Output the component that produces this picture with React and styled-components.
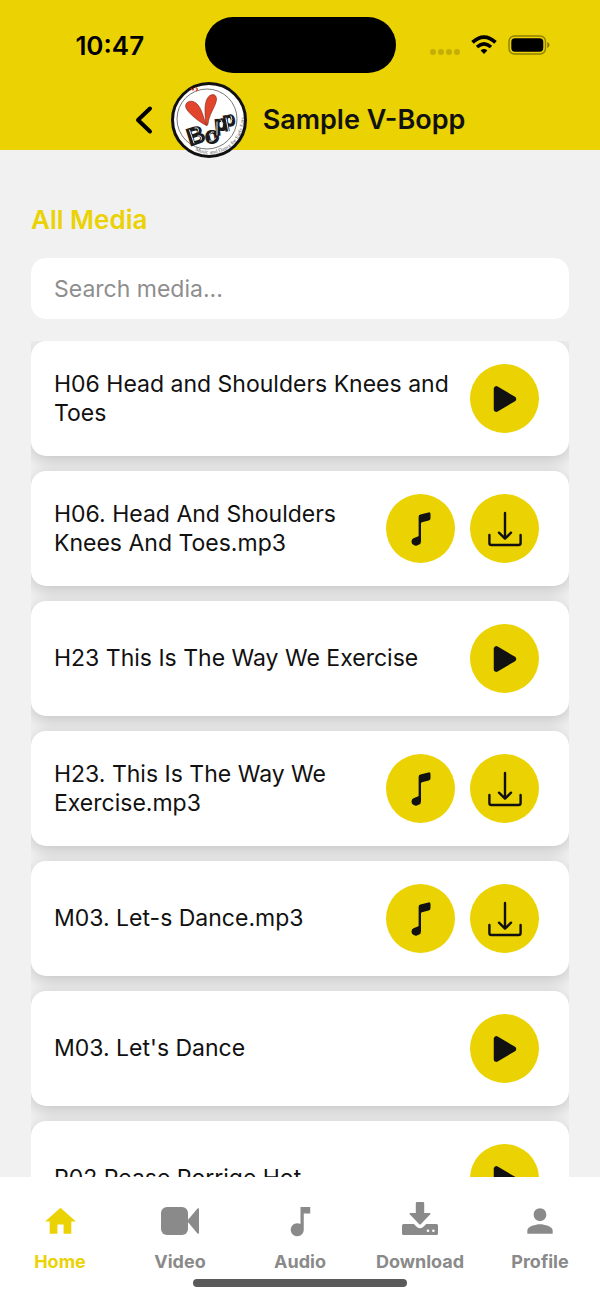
import React, { useState } from 'react'

import styled, { createGlobalStyle } from 'styled-components';
import { IoMusicalNote, IoPlay } from 'react-icons/io5';
import { MdHome, MdMusicNote, MdPerson } from 'react-icons/md';


const media = [
  { title: 'H06 Head and Shoulders Knees and Toes', type: 'video' },
  { title: 'H06. Head And Shoulders Knees And Toes.mp3', type: 'audio' },
  { title: 'H23 This Is The Way We Exercise', type: 'video' },
  { title: 'H23. This Is The Way We Exercise.mp3', type: 'audio' },
  { title: 'M03. Let-s Dance.mp3', type: 'audio' },
  { title: "M03. Let's Dance", type: 'video' },
  { title: 'P02 Pease Porrige Hot', type: 'video' },
]

const VideoIcon = () => (
  <svg width="40" height="28" viewBox="0 0 40 28" fill="currentColor" aria-hidden="true">
    <rect x="1" y="0" width="27" height="28" rx="6" />
    <path d="M27 14L37.500 1.600Q39 .6 39 2.200V25.800Q39 27.400 37.500 26.400Z" />
  </svg>
)

const DownloadIcon = () => (
  <svg width="36" height="38" viewBox="0 0 36 38" aria-hidden="true">
    <path
      fill="currentColor"
      fillRule="evenodd"
      d="M15 0H21Q22.200 0 22.200 1.200V11H27.500Q29.300 11 28 12.400L19 22Q18 23 17 22L8 12.400Q6.700 11 8.500 11H13.800V1.200Q13.800 0 15 0ZM1.600 22H11.800L15.200 25.200Q18 27.400 20.800 25.200L24.200 22H34.400Q36 22 36 23.600V31.400Q36 33 34.400 33H1.600Q0 33 0 31.400V23.600Q0 22 1.600 22ZM26 27.400A1.300 1.300 0 1 0 26 30A1.300 1.300 0 1 0 26 27.400ZM31.400 27.400A1.300 1.300 0 1 0 31.400 30A1.300 1.300 0 1 0 31.400 27.400Z"
    />
  </svg>
)

const TrayIcon = () => (
  <svg width="36" height="36" viewBox="0 0 36 36" fill="none" stroke="currentColor" strokeWidth="2.400" strokeLinecap="round" strokeLinejoin="round" aria-hidden="true">
    <path d="M18 2V27.500M12 21.700L18 27.700L24 21.700M2.400 24V32Q2.400 34 4.400 34H31.600Q33.600 34 33.600 32V24" />
  </svg>
)

const BackIcon = () => (
  <svg width="18" height="30" viewBox="0 0 18 30" fill="none" stroke="currentColor" strokeWidth="4" strokeLinecap="round" strokeLinejoin="round" aria-hidden="true">
    <path d="M15 3.500L3 15L15 26.500" />
  </svg>
)

const WifiIcon = () => (
  <svg width="26" height="20" viewBox="0 0 26 20" aria-hidden="true">
    <g fill="none" stroke="#000" strokeWidth="3.600">
      <path d="M1.500 7.400Q13-3.200 24.500 7.400" />
      <path d="M6 12Q13 5.800 20 12" />
    </g>
    <path d="M9.600 15.400Q13 12.600 16.400 15.400L13 19Z" />
  </svg>
)

const BatteryIcon = () => (
  <svg width="42" height="20" viewBox="0 0 42 20" aria-hidden="true">
    <rect x="1" y="1" width="36.500" height="18" rx="5.500" fill="none" stroke="#000" strokeOpacity=".4" strokeWidth="1.400" />
    <rect x="3.300" y="3.300" width="32" height="13.400" rx="3.600" />
    <path d="M39.300 7V13Q41.500 12 41.500 10T39.300 7Z" fillOpacity=".45" />
  </svg>
)

const Logo = () => (
  <LogoSvg viewBox="0 0 76 76" role="img" aria-label="V-Bopp, Music and Dance for Early Ears">
    <defs>
      <path id="motto" d="M24 68.500A34.500 34.500 0 0 0 70.500 24" />
    </defs>
    <circle cx="38" cy="38" r="36.500" fill="#fff" stroke="#111" strokeWidth="3" />
    <circle cx="36" cy="37" r="30" fill="none" stroke="#555" strokeWidth=".8" />
    <path d="M20 6.500q1 2 3 1M24 6q1-1 2 .5t-1 2.500" fill="none" stroke="#e2452c" strokeWidth="1.400" />
    <g fill="#e2452c" stroke="#7b2419" strokeWidth=".6">
      <path d="M35.500 43.500C28 40 17 31 15 26C13 20 20 17 25 21C31 26 32 35 35.500 43.500Z" />
      <path d="M35 43C34 33 33 23 36 17C39 11 46 11 45.500 18C44 26 38 32 37 42Q36 45 35 43Z" />
    </g>
    <g fontFamily="'Liberation Sans', sans-serif" fontWeight="700" fill="#1b1b1b" stroke="#1b1b1b" strokeWidth="1.400">
      <text x="19" y="64" fontSize="24" transform="rotate(-18 19 64)">B</text>
      <text x="35" y="62" fontSize="23" transform="rotate(-8 35 62)">o</text>
      <text x="44" y="49" fontSize="21" transform="rotate(-6 44 49)">p</text>
      <text x="53" y="45" fontSize="20" transform="rotate(-10 53 45)">p</text>
    </g>
    <g fill="none" stroke="#fff" strokeWidth=".9" strokeLinecap="round">
      <path d="M18.500 48L23 61M24 46q5-1 3 4M27 54q5-1 3 4M38.500 53q1-4 4-3M38.500 59q4 1 6-3M46 40V53M50 38q3 3 1 7M55 36L57.500 49M60 34q2 3 0 7" />
    </g>
    <text fontFamily="'Liberation Serif', serif" fontSize="5.500" fill="#555">
      <textPath href="#motto">Music and Dance for Early Ears</textPath>
    </text>
  </LogoSvg>
)

const tabs = [
  { label: 'Home', icon: <MdHome size={37} /> },
  { label: 'Video', icon: <VideoIcon /> },
  { label: 'Audio', icon: <MdMusicNote size={39} /> },
  { label: 'Download', icon: <DownloadIcon /> },
  { label: 'Profile', icon: <MdPerson size={38} /> },
]

const App = () => {
  //state
  const [search, setSearch] = useState('')
  const [active, setActive] = useState('Home')

  //comportement
  const visible = media.filter((item) =>
    item.title.toLowerCase().includes(search.toLowerCase())
  )

  //render
  return (
    <Screen>
      <GlobalStyle />
      <Header>
        <StatusBar>
          <Time>10:47</Time>
          <Island />
          <Indicators>
            <Dots><Dot /><Dot /><Dot /><Dot /></Dots>
            <WifiIcon />
            <BatteryIcon />
          </Indicators>
        </StatusBar>
        <TitleBar>
          <BackButton type="button" aria-label="Back"><BackIcon /></BackButton>
          <Logo />
          <Title>Sample V-Bopp</Title>
        </TitleBar>
      </Header>

      <Main>
        <Heading>All Media</Heading>
        <Search
          type="text"
          aria-label="Search media"
          placeholder="Search media..."
          value={search}
          onChange={(e) => setSearch(e.target.value)}
        />
        <List>
          {visible.map((item) => (
            <Card key={item.title}>
              <Name>{item.title}</Name>
              {item.type === 'video' ? (
                <RoundButton type="button" aria-label="Play video"><IoPlay size={36} /></RoundButton>
              ) : (
                <>
                  <RoundButton type="button" aria-label="Play audio"><IoMusicalNote size={38} /></RoundButton>
                  <RoundButton type="button" aria-label="Download"><TrayIcon /></RoundButton>
                </>
              )}
            </Card>
          ))}
        </List>
      </Main>

      <Footer>
        <Tabs>
          {tabs.map((tab) => (
            <Tab key={tab.label} type="button" $active={active === tab.label} onClick={() => setActive(tab.label)}>
              <TabIcon>{tab.icon}</TabIcon>
              {tab.label}
            </Tab>
          ))}
        </Tabs>
        <HomeIndicator />
      </Footer>
    </Screen>
  )
}

const GlobalStyle = createGlobalStyle`
  * {
    box-sizing: border-box;
  }
  body {
    margin: 0;
    font-family: Inter, 'Liberation Sans', sans-serif;
    color: #111;
    background: #f1f1f1;
  }
  button, input {
    font-family: inherit;
  }
  svg {
    display: block;
    flex-shrink: 0;
  }
`;
const Screen = styled.div`
  display: flex;
  flex-direction: column;
  height: 100vh;
`;
const Header = styled.header`
  display: flex;
  flex-direction: column;
  height: 150px;
  padding-top: 17px;
  background: #ebd203;
`;
const StatusBar = styled.div`
  display: grid;
  grid-template-columns: 1fr 191px 1fr;
  align-items: center;
`;
const Time = styled.span`
  padding-left: 15px;
  font-size: 26px;
  font-weight: 600;
  text-align: center;
  color: #000;
`;
const Island = styled.div`
  height: 56px;
  border-radius: 28px;
  background: #000;
`;
const Indicators = styled.div`
  display: flex;
  align-items: center;
  padding-left: 34px;
`;
const Dots = styled.div`
  display: flex;
  gap: 2px;
  margin: 13px 11px 0 0;
  & + svg {
    margin-right: 11px;
  }
`;
const Dot = styled.span`
  width: 6px;
  height: 6px;
  border-radius: 50%;
  background: #c4ae04;
`;
const TitleBar = styled.div`
  display: flex;
  align-items: center;
  justify-content: center;
  flex-shrink: 0;
  height: 76px;
  margin-top: 9px;
`;
const BackButton = styled.button`
  padding: 0;
  margin-right: 18px;
  border: 0;
  background: none;
  color: #000;
`;
const LogoSvg = styled.svg`
  width: 76px;
  height: 76px;
  margin-right: 16px;
`;
const Title = styled.h1`
  margin: 0;
  font-size: 27px;
  font-weight: 600;
  line-height: 32px;
`;
const Main = styled.main`
  display: flex;
  flex-direction: column;
  flex: 1;
  min-height: 0;
  padding: 54px 31px 0;
`;
const Heading = styled.h2`
  margin: 0 0 22px;
  font-size: 26px;
  font-weight: 600;
  line-height: 32px;
  color: #ebd203;
`;
const Search = styled.input`
  flex-shrink: 0;
  width: 100%;
  height: 61px;
  margin-bottom: 22px;
  padding: 0 23px;
  border: 0;
  border-radius: 15px;
  background: #fff;
  font-size: 23px;
  color: #111;
  &::placeholder {
    color: #8e8e8e;
    opacity: 1;
  }
`;
const List = styled.ul`
  flex: 1;
  min-height: 0;
  margin: 0;
  padding: 0;
  list-style: none;
  overflow: hidden auto;
  scrollbar-width: none;
`;
const Card = styled.li`
  display: flex;
  align-items: center;
  gap: 15px;
  min-height: 115px;
  margin-bottom: 15px;
  padding: 0 30px 0 23px;
  border-radius: 15px;
  background: #fff;
  box-shadow: 0 4px 16px rgba(0, 0, 0, 0.2);
`;
const Name = styled.span`
  flex: 1;
  font-size: 23px;
  line-height: 29px;
`;
const RoundButton = styled.button`
  display: flex;
  align-items: center;
  justify-content: center;
  flex-shrink: 0;
  width: 69px;
  height: 69px;
  padding: 0;
  border: 0;
  border-radius: 50%;
  background: #ebd203;
  color: #111;
`;
const Footer = styled.footer`
  display: flex;
  flex-direction: column;
  align-items: center;
  height: 122px;
  padding-top: 24px;
  background: #fff;
`;
const Tabs = styled.nav`
  display: grid;
  grid-template-columns: repeat(5, 1fr);
  width: 100%;
`;
const Tab = styled.button`
  display: flex;
  flex-direction: column;
  align-items: center;
  gap: 9px;
  padding: 0;
  border: 0;
  background: none;
  font-size: 18px;
  font-weight: 700;
  line-height: 24px;
  color: ${(props) => (props.$active ? '#ebd203' : '#8a8a8a')};
`;
const TabIcon = styled.span`
  display: flex;
  align-items: center;
  height: 40px;
`;
const HomeIndicator = styled.div`
  width: 214px;
  height: 8px;
  margin-top: 5px;
  border-radius: 4px;
  background: #5a5a5a;
`;

export default App
